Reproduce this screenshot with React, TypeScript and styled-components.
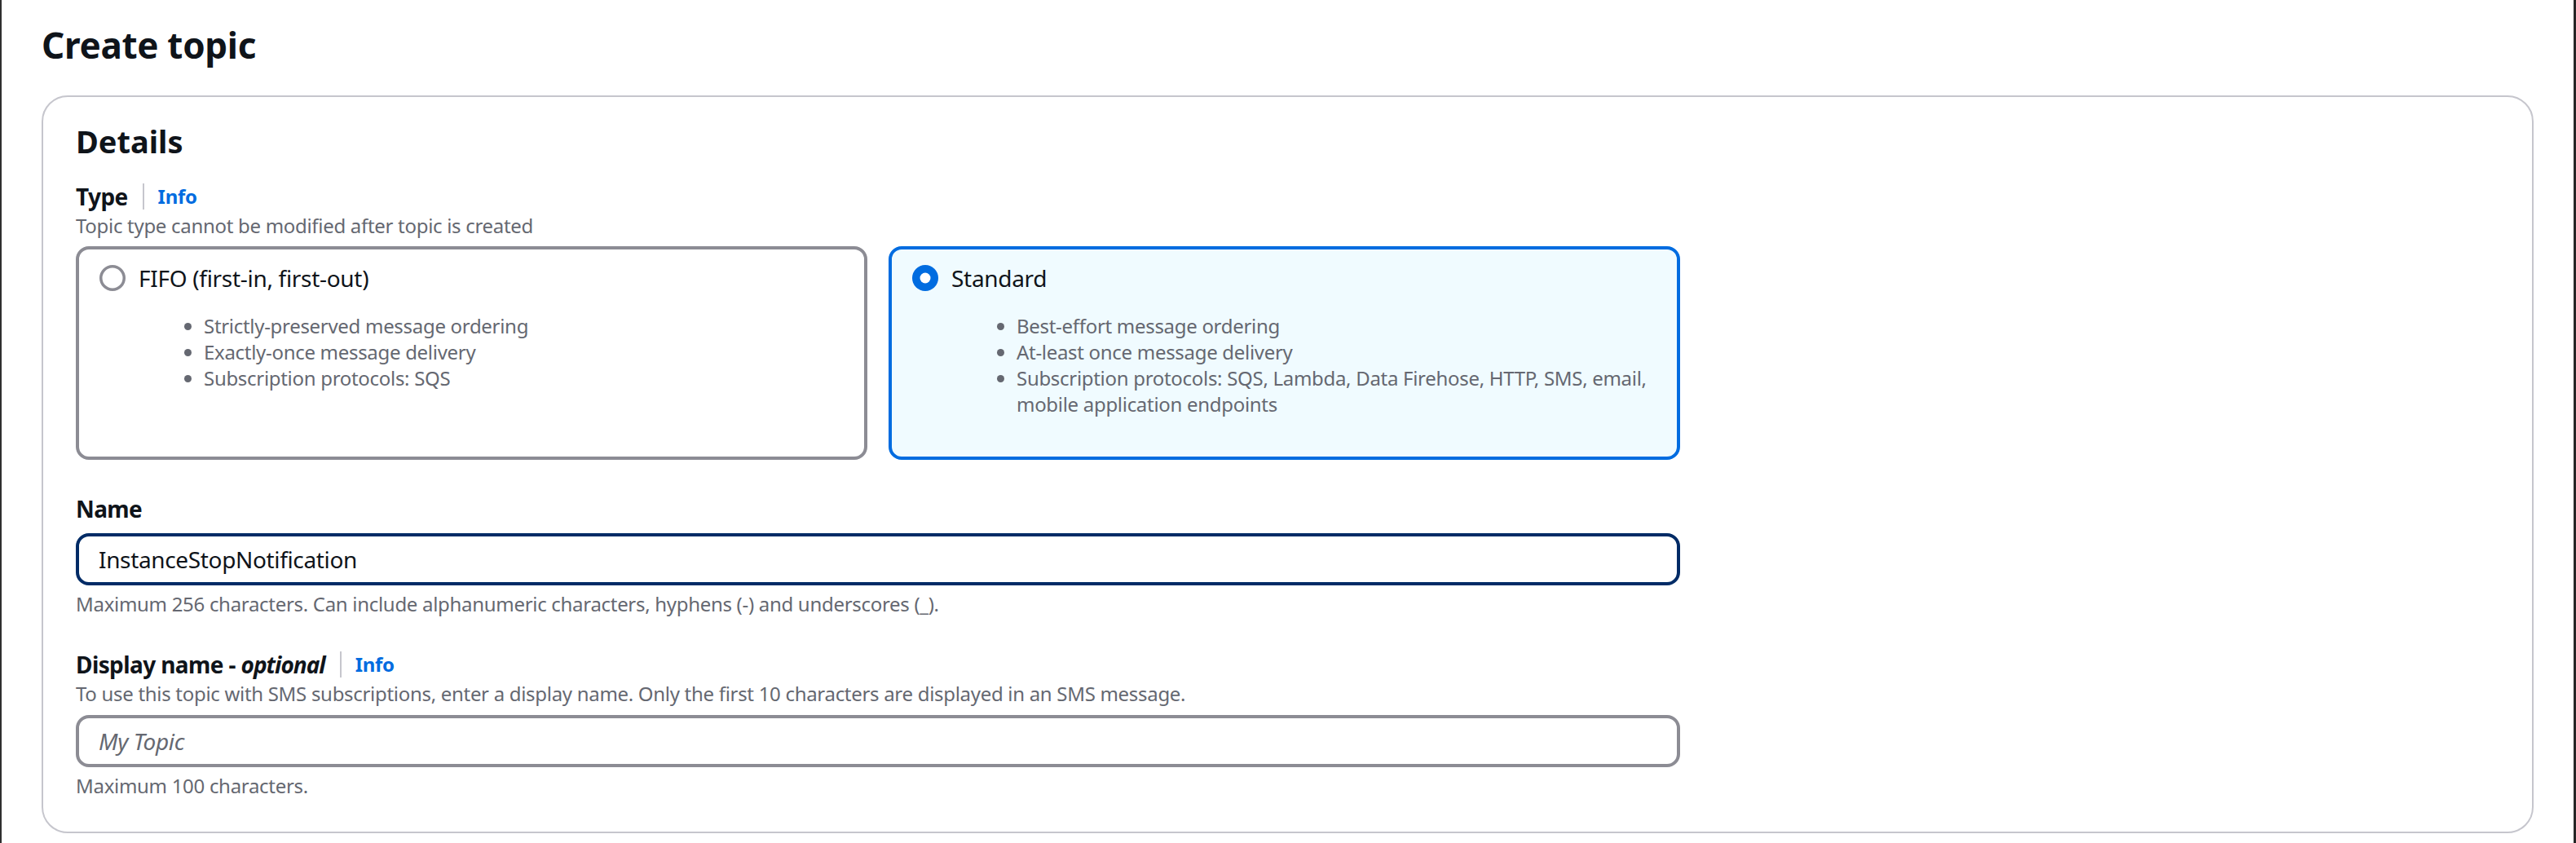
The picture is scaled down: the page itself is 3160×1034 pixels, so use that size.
import React from 'react'
import styled, { createGlobalStyle } from 'styled-components'

const GlobalStyle = createGlobalStyle`
  html, body {
    margin: 0;
    padding: 0;
    background: #ffffff;
  }
  body {
    font-family: 'Noto Sans', 'Open Sans', Arial, sans-serif;
    color: #0f141a;
  }
  * {
    box-sizing: border-box;
  }
`

const Page = styled.div`
  height: 1034px;
  border-left: 2px solid #2f2f2f;
  border-right: 3px solid #262626;
  padding: 27px 49px 0;
  overflow: hidden;
`

const Title = styled.h1`
  margin: 0;
  font-size: 44px;
  line-height: 56px;
  font-weight: 700;
  letter-spacing: -0.3px;
  color: #0f141a;
`

const Container = styled.section`
  margin-top: 34px;
  border: 2px solid #c6c6cd;
  border-radius: 32px;
  padding: 30px 40px 40px;
`

const Heading = styled.h2`
  margin: 0;
  font-size: 38px;
  line-height: 48px;
  font-weight: 700;
  color: #0f141a;
`

const Field = styled.div<{ $gap: number }>`
  max-width: 1968px;
  margin-top: ${({ $gap }) => $gap}px;
`

const LabelRow = styled.div`
  display: flex;
  align-items: center;
  height: 40px;
`

const Label = styled.label`
  font-size: 28px;
  line-height: 40px;
  font-weight: 700;
  letter-spacing: -0.6px;
  color: #0f141a;

  em {
    font-style: italic;
    letter-spacing: -1px;
  }
`

const InfoLink = styled.a`
  margin-left: 18px;
  padding-left: 17px;
  border-left: 2px solid #c6c6cd;
  font-size: 24px;
  line-height: 32px;
  font-weight: 700;
  letter-spacing: -0.3px;
  color: #006ce0;
  text-decoration: none;
`

const Description = styled.div`
  font-size: 24px;
  line-height: 32px;
  letter-spacing: -0.3px;
  color: #656871;
`

const Hint = styled(Description)`
  margin-top: 7px;
`

const Tiles = styled.div`
  display: grid;
  grid-template-columns: 1fr 1fr;
  gap: 26px;
  margin-top: 9px;
`

const Tile = styled.div<{ $checked?: boolean }>`
  border: 4px solid ${({ $checked }) => ($checked ? '#006ce0' : '#8c8c94')};
  background: ${({ $checked }) => ($checked ? '#f0fbff' : '#ffffff')};
  border-radius: 16px;
  padding: 15px 14px 48px 25px;
`

const TileHeader = styled.div`
  display: flex;
  align-items: center;
  gap: 16px;
  height: 40px;
`

const TileLabel = styled.span`
  font-size: 28px;
  line-height: 40px;
  letter-spacing: -0.3px;
  color: #0f141a;
`

const Bullets = styled.ul`
  margin: 23px 0 0;
  padding-left: 128px;
  font-size: 24px;
  line-height: 32px;
  letter-spacing: -0.3px;
  color: #656871;
`

const Input = styled.input<{ $focused?: boolean }>`
  display: block;
  width: 100%;
  height: 64px;
  margin-top: 10px;
  padding: 0 24px;
  border: 4px solid ${({ $focused }) => ($focused ? '#002b66' : '#8c8c94')};
  border-radius: 16px;
  font-family: inherit;
  font-size: 28px;
  letter-spacing: -0.35px;
  color: #0f141a;
  background: #ffffff;
  outline: none;

  &::placeholder {
    color: #656871;
    font-style: italic;
    opacity: 1;
  }
`

const Radio = ({ checked }: { checked?: boolean }) => (
  <svg width="32" height="32" viewBox="0 0 32 32" style={{ flexShrink: 0 }}>
    {checked ? (
      <>
        <circle cx="16" cy="16" r="16" fill="#006ce0" />
        <circle cx="16" cy="16" r="6.5" fill="#ffffff" />
      </>
    ) : (
      <circle cx="16" cy="16" r="14.25" fill="#ffffff" stroke="#8c8c94" strokeWidth="3.5" />
    )}
  </svg>
)

const topicTypes = [
  {
    label: 'FIFO (first-in, first-out)',
    checked: false,
    points: ['Strictly-preserved message ordering', 'Exactly-once message delivery', 'Subscription protocols: SQS'],
  },
  {
    label: 'Standard',
    checked: true,
    points: [
      'Best-effort message ordering',
      'At-least once message delivery',
      'Subscription protocols: SQS, Lambda, Data Firehose, HTTP, SMS, email, mobile application endpoints',
    ],
  },
]

const App = () => {
  return (
    <Page>
      <GlobalStyle />
      <Title>Create topic</Title>

      <Container>
        <Heading>Details</Heading>

        <Field $gap={24}>
          <LabelRow>
            <Label>Type</Label>
            <InfoLink href="#">Info</InfoLink>
          </LabelRow>
          <Description>Topic type cannot be modified after topic is created</Description>
          <Tiles>
            {topicTypes.map((t) => (
              <Tile key={t.label} $checked={t.checked}>
                <TileHeader>
                  <Radio checked={t.checked} />
                  <TileLabel>{t.label}</TileLabel>
                </TileHeader>
                <Bullets>
                  {t.points.map((p) => (
                    <li key={p}>{p}</li>
                  ))}
                </Bullets>
              </Tile>
            ))}
          </Tiles>
        </Field>

        <Field $gap={40}>
          <LabelRow>
            <Label>Name</Label>
          </LabelRow>
          <Input $focused readOnly defaultValue="InstanceStopNotification" />
          <Hint>Maximum 256 characters. Can include alphanumeric characters, hyphens (-) and underscores (_).</Hint>
        </Field>

        <Field $gap={38}>
          <LabelRow>
            <Label>
              Display name - <em>optional</em>
            </Label>
            <InfoLink href="#">Info</InfoLink>
          </LabelRow>
          <Description>
            To use this topic with SMS subscriptions, enter a display name. Only the first 10 characters are displayed in an
            SMS message.
          </Description>
          <Input readOnly placeholder="My Topic" />
          <Hint>Maximum 100 characters.</Hint>
        </Field>
      </Container>
    </Page>
  )
}

export default App
